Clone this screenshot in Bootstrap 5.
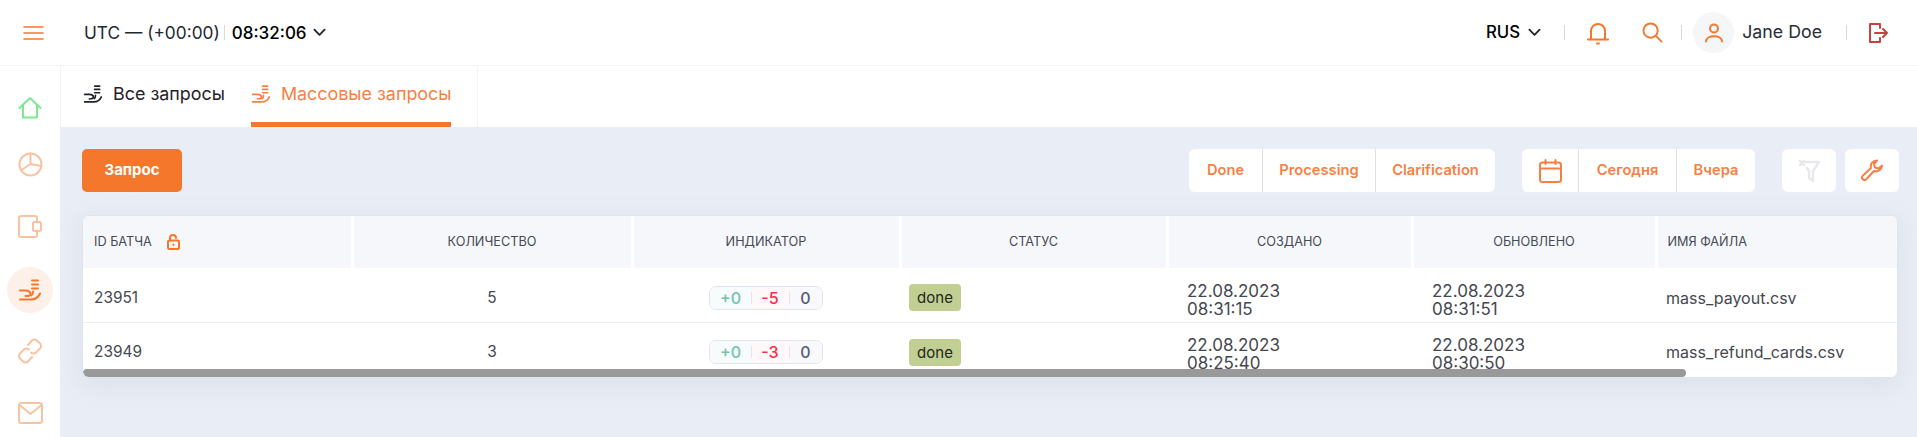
<!DOCTYPE html>
<html lang="ru">
<head>
  <meta charset="UTF-8" />
  <meta name="viewport" content="width=device-width, initial-scale=1.0"/>
  <title>Массовые запросы</title>
  <link href="https://cdn.jsdelivr.net/npm/bootstrap@5.3.0/dist/css/bootstrap.min.css" rel="stylesheet" />
  <style>
    html, body { height: 100%; overflow: hidden; }
    body {
      font-family: Inter, "Open Sans", sans-serif;
      background: #e9edf5;
      color: #22252b;
    }
    svg.ico { fill: none; stroke: currentColor; stroke-width: 2; stroke-linecap: round; stroke-linejoin: round; display: block; flex: none; }
    .tint { color: #f4772b; }
    .sp-4 { margin-left: 4px; } .sp-6 { margin-left: 6px; } .sp-7 { margin-left: 7px; } .sp-8 { margin-left: 8px; }
    .sp-9 { margin-left: 9px; } .sp-11 { margin-left: 11px; } .sp-18 { margin-left: 18px; }
    .sp-22 { margin-left: 22px; } .sp-23 { margin-left: 23px; } .sp-24 { margin-left: 24px; }
    .sp-27 { margin-left: 27px; } .sp-33 { margin-left: 33px; }

    /* top bar */
    .top-bar { height: 66px; background: #fff; border-bottom: 1px solid #f2f3f6; padding-left: 23px; }
    .burger { width: 21px; margin-right: 40px; }
    .utc-text { font-size: 17.300px; color: #23262d; }
    .clock { font-size: 17px; font-weight: 500; color: #000; margin-top: 2px; }
    .bar-sep { width: 1px; height: 15px; background: #d9dade; }
    .top-right { margin-left: auto; padding-right: 29px; }
    .lang { font-size: 16.800px; font-weight: 500; color: #000; }
    .avatar { width: 41px; height: 41px; border-radius: 50%; background: #f5f6f8; }
    .user-name { font-size: 17.800px; color: #2a2d35; }
    .logout-ico { color: #c9403f; }

    /* side menu */
    .page-body { height: calc(100vh - 66px); }
    .side-menu {
      width: 60px; flex: none; background: #fff; padding-top: 14px;
      display: grid; grid-template-rows: 56px 56px 68px 60px 62px 62px; justify-items: center; align-items: center;
    }
    .side-item { color: #f9c3a1; width: 46px; height: 46px; border-radius: 50%; }
    .side-item.home { color: #7fe692; }
    .side-item.active { color: #f4772b; background: #fdf0e8; }

    /* tabs */
    .tabs-bar { height: 61px; background: #fff; padding-left: 22px; border-left: 1px solid #f2f3f6; }
    .tabs-inner { width: 395px; height: 100%; border-right: 1px solid #f2f3f6; gap: 26px; }
    .tab-item { height: 100%; font-size: 17.900px; color: #1f2229; text-decoration: none; gap: 10px; border-bottom: 5px solid transparent; }
    .tab-item.active { color: #f77f45; border-bottom-color: #f4772b; }

    /* toolbar */
    .main-pane { background: #e9edf5; min-width: 0; }
    .toolbar { padding: 22px 18px 23px 22px; }
    .request-btn { width: 100px; height: 43px; font-size: 15px; font-weight: 700; color: #fff; background: #f4772b; border: 0; border-radius: 5px; }
    .btn-box { height: 43px; background: #fff; border-radius: 6px; overflow: hidden; }
    .btn-box a {
      display: flex; align-items: center; justify-content: center; height: 100%;
      font-size: 14.700px; font-weight: 600; color: #f77f45; text-decoration: none; border-left: 1px solid #e0e1e5;
    }
    .btn-box a:first-child { border-left: 0; }
    .w-done { width: 73px; } .w-proc { width: 113px; } .w-clar { width: 120px; }
    .w-cal { width: 56px; } .w-today { width: 98px; } .w-yest { width: 79px; }
    .w-one { width: 54px; }
    .btn-box a.filter-off { color: #e8e9ec; }
    .filter-off svg.ico { stroke-width: 2.500; }

    /* table */
    .batch-card {
      position: relative; height: 163px; margin: 0 19px 0 22px; background: #fff; overflow: hidden;
      border-radius: 7px; border: 1px solid #dfe4ee; box-shadow: 0 6px 24px rgba(150, 160, 190, .18);
    }
    .batch-table { table-layout: fixed; width: 1815px; margin: 0; --bs-table-bg: transparent; }
    .batch-table th {
      height: 52px; padding: 0 10px; background: #f6f7fa; border-bottom: 0; border-right: 3px solid #fff;
      font-size: 12.700px; font-weight: 400; color: #454a55; text-align: center; vertical-align: middle; text-transform: uppercase;
    }
    .batch-table th:last-child { border-right: 0; text-align: left; }
    .batch-table th:first-child { text-align: left; padding-left: 11px; }
    .batch-table td {
      height: 54px; padding: 6px 10px 0; border-bottom: 1px solid #e9edf4;
      font-size: 15.400px; color: #45484f; vertical-align: middle; line-height: 18px;
    }
    .batch-table td:first-child { padding-left: 11px; }
    .batch-table tr:last-child td { border-bottom: 0; }
    .c-id { width: 269px; } .c-qty { width: 280px; } .c-ind { width: 268px; } .c-st { width: 267px; }
    .c-cr { width: 245px; } .c-up { width: 244px; } .c-fn { width: 242px; }
    .batch-table td.date-cell { padding: 10px 0 0 20px; font-size: 17px; }
    .batch-table td.st-cell { padding-left: 9px; }
    .batch-table td.file-cell { font-size: 16px; }
    .lock-ico { margin-left: 15px; }
    .indicator { width: 114px; height: 24px; border: 1px solid #dfe4f0; border-radius: 7px; font-size: 16px; font-weight: 500; line-height: 1; overflow: hidden; }
    .indicator span { display: flex; align-items: center; justify-content: center; height: 100%; position: relative; }
    .i-plus { width: 41px; color: #6cc3ae; background: #f8fbfc; }
    .i-minus { width: 38px; color: #fb2b4d; background: #fff8f8; }
    .i-zero { width: 33px; color: #545a75; background: #f9f9fb; }
    .i-minus::before, .i-zero::before { content: ""; position: absolute; left: 0; top: 5px; bottom: 5px; width: 1px; background: #dfe4f0; }
    .status-done { display: inline-block; width: 52px; height: 27px; line-height: 27px; text-align: center; font-size: 15px; color: #23261d; background: #c1cf93; border-radius: 4px; }
    .scroll-thumb { position: absolute; left: 0; bottom: 0; width: 1603px; height: 8px; background: #999; border-radius: 4px; }
  </style>
</head>
<body>
  <svg width="0" height="0" class="position-absolute">
    <defs>
      <symbol id="hand" viewBox="0 0 24 24">
        <path d="M14 2.500h6M14 6.500h6M14 10.500h6"/>
        <path d="M2 12.500h5.500c3 0 5 1.500 5 3.500s-2 2-5 2"/>
        <path d="M15 13.500c0 1.500 0 3-1.500 4M2 21.500h11c4 0 7-1.500 9-6"/>
      </symbol>
      <symbol id="chev" viewBox="0 0 14 9">
        <path d="M1.500 1.500 7 7l5.500-5.500"/>
      </symbol>
    </defs>
  </svg>

  <header class="top-bar d-flex align-items-center">
    <svg class="ico burger tint" width="21" height="16" viewBox="0 0 21 16"><path d="M1 2h19M1 8h19M1 14h19" stroke-width="1.600"/></svg>
    <span class="utc-text">UTC — (+00:00)</span>
    <span class="bar-sep sp-4"></span>
    <span class="clock sp-7">08:32:06</span>
    <svg class="ico sp-6" width="13" height="9"><use href="#chev"/></svg>

    <div class="top-right d-flex align-items-center">
      <span class="lang">RUS</span>
      <svg class="ico sp-8" width="13" height="9"><use href="#chev"/></svg>
      <span class="bar-sep sp-23"></span>
      <svg class="ico tint sp-22" width="22" height="24" viewBox="0 0 22 24"><path d="M1 18.500h20M4 18.500V10a7 7 0 0 1 14 0v8.500M10 22.500h2"/></svg>
      <svg class="ico tint sp-33" width="21" height="21" viewBox="0 0 22 22"><circle cx="9" cy="9" r="7.500"/><path d="m14.500 14.500 6 6"/></svg>
      <span class="bar-sep sp-18"></span>
      <span class="avatar d-flex align-items-center justify-content-center sp-11">
        <svg class="ico tint" width="18" height="20" viewBox="0 0 18 20"><circle cx="9" cy="5.500" r="4"/><path d="M1 18.500c0-7 16-7 16 0"/></svg>
      </span>
      <span class="user-name sp-8">Jane Doe</span>
      <span class="bar-sep sp-24"></span>
      <svg class="ico logout-ico sp-22" width="19" height="20" viewBox="0 0 19 20"><path d="M11 5V1H1v18h10v-4M6 10h12M14 6l4 4-4 4"/></svg>
    </div>
  </header>

  <div class="page-body d-flex">
    <nav class="side-menu">
      <div class="side-item home d-flex align-items-center justify-content-center">
        <svg class="ico" width="24" height="24" viewBox="0 0 24 24"><path d="M1.500 12 12 2l10.500 10M5 9.500V21.500h14V9.500"/></svg>
      </div>
      <div class="side-item d-flex align-items-center justify-content-center">
        <svg class="ico" width="25" height="25" viewBox="0 0 25 25"><circle cx="12.500" cy="12.500" r="11"/><path d="M12.500 1.500v10.500l10.500 2M12.500 12l-9 6"/></svg>
      </div>
      <div class="side-item d-flex align-items-center justify-content-center">
        <svg class="ico" width="24" height="23" viewBox="0 0 24 23"><path d="M19 7V3a2 2 0 0 0-2-2H3a2 2 0 0 0-2 2v17a2 2 0 0 0 2 2h14a2 2 0 0 0 2-2v-4"/><rect x="15" y="7" width="8" height="9" rx="1.500"/></svg>
      </div>
      <div class="side-item active d-flex align-items-center justify-content-center">
        <svg class="ico" width="24" height="24"><use href="#hand"/></svg>
      </div>
      <div class="side-item d-flex align-items-center justify-content-center">
        <svg class="ico" width="26" height="26" viewBox="0 0 26 26"><path d="m11 7 4-4.500a3.500 3.500 0 0 1 5 0l3 3a3.500 3.500 0 0 1 0 5l-4 4a3.500 3.500 0 0 1-5 0"/><path d="m15 19-4 4.500a3.500 3.500 0 0 1-5 0l-3-3a3.500 3.500 0 0 1 0-5l4-4a3.500 3.500 0 0 1 5 0"/></svg>
      </div>
      <div class="side-item d-flex align-items-center justify-content-center">
        <svg class="ico" width="25" height="22" viewBox="0 0 25 22"><rect x="1" y="1" width="23" height="20" rx="2.500"/><path d="m1.500 3 11 9 11-9"/></svg>
      </div>
    </nav>

    <div class="main-pane flex-grow-1">
      <div class="tabs-bar">
        <div class="tabs-inner d-flex">
          <a class="tab-item d-flex align-items-center" href="#">
            <svg class="ico" width="20" height="20"><use href="#hand"/></svg>
            Все запросы
          </a>
          <a class="tab-item active d-flex align-items-center" href="#">
            <svg class="ico" width="20" height="20"><use href="#hand"/></svg>
            Массовые запросы
          </a>
        </div>
      </div>

      <div class="toolbar d-flex align-items-center">
        <button class="request-btn" type="button">Запрос</button>
        <div class="btn-box d-flex ms-auto">
          <a class="w-done" href="#">Done</a>
          <a class="w-proc" href="#">Processing</a>
          <a class="w-clar" href="#">Clarification</a>
        </div>
        <div class="btn-box d-flex sp-27">
          <a class="w-cal" href="#">
            <svg class="ico" width="23" height="24" viewBox="0 0 23 24"><rect x="1" y="3.500" width="21" height="19.500" rx="2.500"/><path d="M1 9.500h21M6.500 1v4M16.500 1v4"/></svg>
          </a>
          <a class="w-today" href="#">Сегодня</a>
          <a class="w-yest" href="#">Вчера</a>
        </div>
        <div class="btn-box sp-27 w-one">
          <a class="filter-off" href="#">
            <svg class="ico" width="22" height="24" viewBox="0 0 22 24"><path d="M8 3h13l-6 9v10l-4-3v-7L9 9M2 2l4 4M6 2 2 6"/></svg>
          </a>
        </div>
        <div class="btn-box sp-9 w-one">
          <a href="#">
            <svg class="ico" width="24" height="24" viewBox="0 0 24 24"><path d="M22 6.500a6 6 0 0 1-8 5.500L6 20.500a2.500 2.500 0 0 1-3.500-3.500l8.500-8a6 6 0 0 1 6-7.500l-3 3.500 1 3.500 3.500 1z"/></svg>
          </a>
        </div>
      </div>

      <div class="batch-card">
        <table class="table batch-table">
          <colgroup>
            <col class="c-id"><col class="c-qty"><col class="c-ind"><col class="c-st"><col class="c-cr"><col class="c-up"><col class="c-fn">
          </colgroup>
          <thead>
            <tr>
              <th>
                <span class="d-inline-flex align-items-center">ID батча
                  <svg class="ico tint lock-ico" width="13" height="16" viewBox="0 0 13 16" stroke-width="1.400"><rect x="1" y="6.500" width="11" height="8.500" rx="1.500"/><path d="M3 6.500V4a3 3 0 0 1 6 0"/><path d="M6.500 10.500v.5"/></svg>
                </span>
              </th>
              <th>Количество</th>
              <th>Индикатор</th>
              <th>Статус</th>
              <th>Создано</th>
              <th>Обновлено</th>
              <th>Имя файла</th>
            </tr>
          </thead>
          <tbody>
            <tr>
              <td>23951</td>
              <td class="text-center">5</td>
              <td>
                <div class="indicator d-flex mx-auto">
                  <span class="i-plus">+0</span><span class="i-minus">-5</span><span class="i-zero">0</span>
                </div>
              </td>
              <td class="st-cell"><span class="status-done">done</span></td>
              <td class="date-cell">22.08.2023<br>08:31:15</td>
              <td class="date-cell">22.08.2023<br>08:31:51</td>
              <td class="file-cell">mass_payout.csv</td>
            </tr>
            <tr>
              <td>23949</td>
              <td class="text-center">3</td>
              <td>
                <div class="indicator d-flex mx-auto">
                  <span class="i-plus">+0</span><span class="i-minus">-3</span><span class="i-zero">0</span>
                </div>
              </td>
              <td class="st-cell"><span class="status-done">done</span></td>
              <td class="date-cell">22.08.2023<br>08:25:40</td>
              <td class="date-cell">22.08.2023<br>08:30:50</td>
              <td class="file-cell">mass_refund_cards.csv</td>
            </tr>
          </tbody>
        </table>
        <div class="scroll-thumb"></div>
      </div>
    </div>
  </div>
</body>
</html>
